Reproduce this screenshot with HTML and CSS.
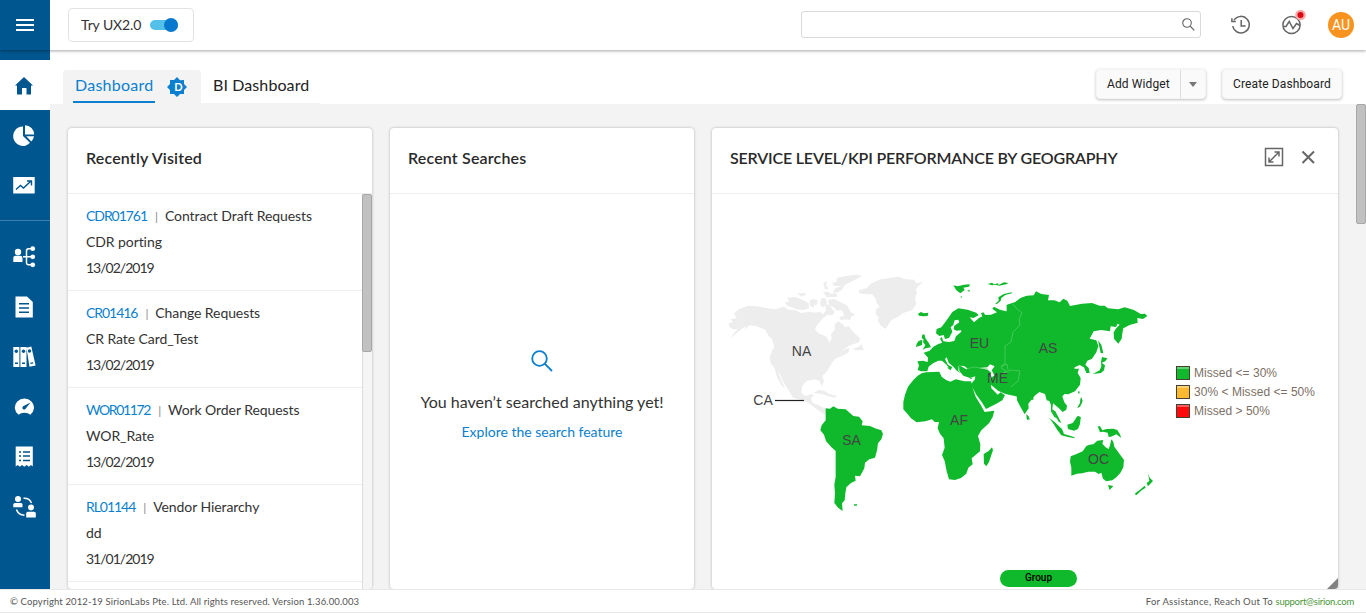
FILE: index.html
```html
<!DOCTYPE html>
<html lang="en">
<head>
<meta charset="utf-8">
<title>Dashboard</title>
<link rel="stylesheet" href="styles.css">
</head>
<body>
<div class="app">
  <header class="topbar">
    <button class="menu" aria-label="Menu"><span></span><span></span><span></span></button>
    <div class="try"><span class="try-label">Try UX2.0</span><span class="switch"><i></i></span></div>
    <div class="search"><svg width="13" height="13" viewBox="0 0 14 14"><circle cx="5.4" cy="5.4" r="4.6"/><path d="M8.6 8.6L13.300 13.300"/></svg></div>
    <svg class="history" width="22" height="22" viewBox="0 0 22 22"><path d="M4 6.2A8.3 8.3 0 1 1 2.8 12M1.9 4.2V7.6H5.8M11.2 6V12H15.6"/></svg>
    <svg class="activity" width="26" height="32" viewBox="0 0 26 32"><g><circle cx="11.5" cy="19" r="8.6"/><path d="M3.2 20.5H6L9.2 15.5L13 22.5L16.5 17.5L20 19.5"/></g><circle class="halo" cx="20.5" cy="9" r="5.3"/><circle class="dot" cx="20.5" cy="9" r="3"/></svg>
    <span class="avatar">AU</span>
  </header>
  <div class="main">
    <nav class="side">
      <a class="active"><svg width="26" height="26" viewBox="0 0 26 26"><path d="M13 5L22 13.500H20V22.500H15.5V16H11V22.500H6V13.500H4Z"/></svg></a>
      <a><svg width="26" height="26" viewBox="0 0 26 26"><path d="M12 4.500A9.7 9.7 0 1 0 19 20.800L12 14Z"/><path d="M14 3.300A9.3 9.3 0 0 1 23.2 12.5H14ZM15.2 14.300H23A9 9 0 0 1 20.3 19.600Z"/></svg></a>
      <a><svg width="26" height="26" viewBox="0 0 26 26"><path d="M2.2 5H23.7V21.5H2.2Z"/><path class="cut" d="M5 17.5L9.5 13.5L12.5 16L19.5 9.5M16 9H20.5V13.5"/></svg></a>
      <hr>
      <a><svg width="26" height="26" viewBox="0 0 26 26"><circle cx="7" cy="8" r="3.2"/><path d="M2.3 18V14Q2.3 11.8 5 11.8H9Q11.5 11.8 11.5 14V18Z"/><path class="line" d="M22 4.7H17.5Q15.5 4.7 15.5 7V18.5Q15.5 20.8 17.5 20.8H22M12 12.8H22"/><circle cx="21.7" cy="4.7" r="2.4"/><circle cx="21.7" cy="12.8" r="2.4"/><circle cx="21.7" cy="20.8" r="2.4"/></svg></a>
      <a><svg width="26" height="26" viewBox="0 0 26 26"><path d="M4.5 2.5H16L21.8 8V23.5H4.5Z"/><path class="cut" d="M8 9.8H18M8 14H18M8 18.2H18"/></svg></a>
      <a><svg width="26" height="26" viewBox="0 0 26 26"><path d="M2.3 3H8.4V23H2.3ZM9.4 3H15.5V23H9.4ZM15.4 3.7L20.3 2.5L24.6 21.5L18.5 22.7Z"/><g class="holes"><circle cx="5.3" cy="7.3" r="1.7"/><circle cx="12.5" cy="7.3" r="1.7"/><circle cx="18.5" cy="7" r="1.7"/><path d="M4 18.5H7V20H4ZM11 18.5H14V20H11ZM19.3 18.8L22 18.2L22.3 19.5L19.6 20.1Z"/></g></svg></a>
      <a><svg width="26" height="26" viewBox="0 0 26 26"><path d="M7.5 20.7A9.6 9 0 1 1 19.3 20.7Q17.3 18.7 13.4 18.7Q9.7 18.7 7.5 20.7Z"/><path class="holes" d="M19.5 8.5L14.8 14.5A1.8 1.8 0 1 1 12.6 12Z"/></svg></a>
      <a><svg width="26" height="26" viewBox="0 0 26 26"><path d="M4.7 2.5H21.8V22.5L20 21L17.9 22.7L15.7 21L13.3 22.7L11 21L8.8 22.7L6.7 21L4.7 22.5Z"/><path class="cut" d="M8 8H10M12 8H19M8 12H10M12 12H19M8 16.5H10M12 16.5H19"/></svg></a>
      <a><svg width="26" height="26" viewBox="0 0 26 26"><circle cx="7" cy="5" r="3"/><path d="M2.3 13.3V10.5Q2.3 9 4 9H10Q11.5 9 11.5 10.5V13.3Z"/><circle cx="20" cy="13.4" r="3"/><path d="M15.2 23.5V19.3Q15.2 17.7 17 17.7H23Q24.8 17.7 24.8 19.3V23.5Z"/><path class="line" d="M12.5 4.3Q18.5 4 20.5 9M5.5 15.5Q7 21 13.5 21.3"/></svg></a>
    </nav>
    <main class="content">
      <div class="tabs">
        <div class="tab current"><span>Dashboard</span><svg width="22" height="22" viewBox="0 0 22 22"><path d="M11 1L14 4.2L18 4L18 8L21 11L18 14V18H14L11 21L8 18H4V14L1 11L4 8V4H8Z"/><text x="12.4" y="15.1">D</text></svg></div>
        <div class="tab">BI Dashboard</div>
        <div class="actions">
          <div class="btn split"><span>Add Widget</span><b><i></i></b></div>
          <div class="btn create">Create Dashboard</div>
        </div>
      </div>
      <div class="board">
        <section class="card narrow">
          <h2 class="spaced">Recently Visited</h2>
          <div class="visited">
            <ul>
              <li><p><a>CDR01761</a><em>|</em>Contract Draft Requests</p><p>CDR porting</p><p class="date">13/02/2019</p></li>
              <li><p><a>CR01416</a><em>|</em>Change Requests</p><p>CR Rate Card_Test</p><p class="date">13/02/2019</p></li>
              <li><p><a class="tight">WOR01172</a><em>|</em>Work Order Requests</p><p>WOR_Rate</p><p class="date">13/02/2019</p></li>
              <li><p><a>RL01144</a><em>|</em>Vendor Hierarchy</p><p>dd</p><p class="date">31/01/2019</p></li>
            </ul>
            <div class="bar"><i></i></div>
          </div>
        </section>
        <section class="card narrow">
          <h2 class="spaced">Recent Searches</h2>
          <div class="empty">
            <svg width="22" height="22" viewBox="0 0 22 22"><circle cx="8.5" cy="8.5" r="7.3"/><path d="M13.7 13.7L21 21"/></svg>
            <p>You haven’t searched anything yet!</p>
            <a>Explore the search feature</a>
          </div>
        </section>
        <section class="card wide">
          <h2><span>SERVICE LEVEL/KPI PERFORMANCE BY GEOGRAPHY</span>
            <svg width="52" height="20" viewBox="0 0 52 20"><path d="M1.5 1.5H18.5V18.5H1.5ZM5 15L15 5M10.5 5H15V9.5M5 10.5V15H9.5"/><path class="close" d="M38.5 4.5L50 16M50 4.5L38.5 16"/></svg>
          </h2>
          <svg class="map" width="626" height="395" viewBox="712 194 626 395">
            <g class="none" transform="translate(720 260) scale(.33333)">
              <path d="M28 200L26 190L38 187L32 177L50 175L42 160L58 147L85 137L110 139L135 143L165 148L192 140L204 149L225 150L244 159L269 155L288 158L300 155L310 163L318 150L315 132L332 135L334 145L345 155L337 166L322 164L307 177L291 196L285 208L295 220L320 230L328 249L335 235L333 223L344 209L344 193L354 184L368 192L374 202L386 199L403 219L420 235L417 247L390 256L374 267L360 278L376 268L388 264L386 277L367 288L350 293L336 307L329 321L320 335L307 348L312 362L306 379L298 362L283 358L260 363L247 377L244 398L256 408L276 402L282 407L273 414L278 429L293 434L320 448L345 462L342 470L310 462L280 440L266 429L242 419L219 413L207 393L190 366L180 343L173 333L185 364L195 384L185 377L171 352L164 325L152 310L149 292L157 271L163 260L156 238L145 227L136 209L110 199L90 196L73 208L76 199L58 212L32 235L42 219L54 206L40 208Z"/>
              <path d="M201 113L226 111L242 117L252 122L267 130L266 145L250 150L229 148L215 142L201 137L195 127L208 125ZM231 101L252 98L259 103L247 110ZM270 121L281 117L293 121L292 133L281 136L282 143L270 137ZM304 115L317 115L321 129L308 143L300 132ZM309 96L325 95L331 101L350 100L352 110L320 112ZM323 121L342 116L356 124L367 129L382 137L392 156L405 164L392 171L392 181L378 178L362 181L358 171L373 167L365 151L350 152L341 142L329 136ZM310 68L320 64L319 78L327 85L315 89ZM336 70L350 65L350 54L377 48L412 44L426 49L409 58L386 69L374 76L365 90L350 98L337 96L348 84L362 79L343 77Z"/>
              <path d="M416 91L441 84L451 71L482 58L535 50L557 58L583 59L588 69L610 66L596 78L587 88L591 98L585 117L589 132L576 151L550 159L535 170L514 180L497 207L482 197L473 181L477 172L467 163L469 146L479 140L470 130L467 115L456 102L437 103L418 100Z"/>
              <path d="M280 399L298 389L314 393L328 402L352 408L338 412L322 407L306 402ZM330 410L348 407L347 413ZM415 261L425 253L431 270L407 271L397 267ZM352 270L368 259L371 264Z"/>
            </g>
            <g class="met" transform="translate(890 270) scale(.33333)">
              <path d="M83 300L87 286L82 274L99 272L113 276L114 263L101 248L119 242L130 230L145 222L157 218L150 206L155 201L160 214L177 216L193 213L198 199L214 185L213 181L199 182L191 178L193 167L208 157L205 149L194 151L190 164L182 172L187 185L177 204L165 207L161 195L148 198L138 190L140 177L154 172L171 149L187 126L205 115L233 119L259 128L266 136L250 144L239 142L252 157L267 144L277 139L273 130L280 127L286 135L303 134L321 127L307 116L312 110L330 119L355 125L350 105L378 96L391 85L410 79L430 82L430 390L360 375L345 371L324 362L310 350L303 344L304 355L316 367L323 374L332 367L345 376L337 391L319 401L288 417L277 399L259 374L246 350L242 343L254 329L256 319L240 324L220 317L208 303L207 286L219 292L228 298L240 294L269 294L293 299L304 308L300 326L313 316L305 301L314 289L300 283L292 292L274 293L239 300L222 288L206 287L205 302L211 310L199 301L190 290L176 278L170 262L165 267L174 285L187 291L181 300L170 285L156 272L145 272L129 280L116 290L112 304L93 304Z"/>
              <path d="M97 194L103 193L107 206L116 218L123 232L107 235L98 239L106 225L99 216L101 209L95 203ZM86 213L97 209L96 225L78 231L80 221ZM84 131L93 126L101 130L115 128L113 138L99 139L87 137ZM190 46L203 49L222 44L240 43L237 50L220 53L224 60L211 70L199 61ZM315 102L326 92L325 82L341 72L365 67L366 70L346 75L334 84L332 92L322 101ZM211 80L217 79L214 84ZM293 42L306 38L312 43L324 40L326 45L342 37L355 39L349 43L327 47L317 44L306 46ZM232 62L240 59L238 65ZM171 293L184 292L183 301ZM238 325L249 323L243 327Z"/>
            </g>
            <g class="met" transform="translate(1000 270) scale(.33333)">
              <path d="M20 105L45 97L62 84L80 77L101 76L108 64L124 72L147 75L144 91L163 91L179 97L190 86L202 92L210 108L246 101L276 99L299 107L314 107L324 115L355 118L374 112L402 120L422 132L435 131L442 138L429 147L412 144L413 158L389 165L370 175L367 190L365 206L355 221L342 206L341 187L349 174L359 164L353 161L348 171L332 169L330 184L303 180L281 184L269 206L289 211L295 228L289 247L276 266L262 272L256 284L266 294L269 309L259 309L252 292L239 285L224 292L223 296L237 296L233 309L242 324L240 344L225 364L205 373L194 372L187 379L193 397L201 407L199 419L188 426L176 414L166 406L159 400L157 418L167 438L179 449L163 441L153 424L153 405L148 393L140 391L135 372L118 366L104 377L85 401L86 415L74 433L62 412L51 391L50 375L34 370L18 365L20 103Z"/>
              <path d="M294 211L304 224L310 250L302 249ZM306 261L322 265L316 274L305 278L315 286L312 301L303 309L278 312L299 301L304 289L303 275ZM82 436L90 448L81 449ZM235 363L240 366L234 370ZM242 382L246 396L240 410L232 414L240 400ZM226 445L236 438L243 443L238 450Z"/>
            </g>
            <g class="met" transform="translate(810 380) scale(.33333)">
              <path d="M310 0L323 -13L335 -20L348 -23L388 -25L395 -10L407 -1L421 5L437 -2L463 4L483 4L488 24L497 50L510 71L524 96L553 92L548 111L537 130L514 151L504 168L511 193L510 214L485 235L488 253L475 263L469 281L453 294L435 300L417 298L410 274L404 243L396 225L404 203L401 175L390 161L383 145L387 126L374 126L366 118L346 124L320 127L303 115L292 101L280 88L280 66L285 44L294 20ZM546 202L549 211L545 222L537 246L529 259L522 251L521 222L536 213Z"/>
              <path d="M47 85L60 86L70 79L83 86L107 88L130 108L147 110L158 124L155 136L180 138L195 145L214 151L219 162L214 178L204 190L201 211L195 233L178 238L165 248L163 265L150 289L135 287L137 302L123 309L109 322L106 340L104 361L96 370L98 393L85 384L73 369L75 340L73 315L77 290V213L63 200L48 183L42 164L31 151L35 136L47 121ZM131 373L142 373L140 377L133 377Z"/>
            </g>
            <g class="met" transform="translate(1020 380) scale(.33333)">
              <path d="M87 113L103 125L126 147L132 162L162 171L165 175L144 171L124 166L112 150L101 132ZM142 134L158 129L174 107L182 113L180 132L174 147L162 152L144 147ZM96 88L106 94L119 119L124 129L116 125L105 106ZM19 103L27 110L25 119L20 116ZM174 35L180 39L177 41ZM184 51L188 63L181 77L172 83L181 69ZM233 139L240 139L247 151L260 147L280 146L292 150L299 161L304 174L289 163L273 170L266 171L263 158L249 155L240 157Z"/>
              <path d="M152 229L168 223L188 214L199 198L208 194L220 193L232 182L250 180L247 191L257 202L266 207L270 196L274 178L280 185L283 200L295 217L312 240L310 262L301 279L289 292L277 301L259 304L249 296L244 278L236 282L225 275L205 275L186 280L171 281L154 287L154 263L150 245ZM264 315L280 318L269 330ZM384 280L389 293L399 303L384 319L380 309L388 303ZM374 317L377 323L365 331L349 346L344 341L360 329Z"/>
            </g>
            <g class="border">
              <path d="M1013 304L1016 308L1022 313L1019 319L1020 325L1013 332L1011 342L1005 346V363L1001 368L1006 371L1002 374L1011 370L1020 371L1018 381L1011 387M966 369L974 367L988 369M1001 366L1007 364L1008 370"/>
            </g>
            <path class="leader" d="M775 400.500H804"/>
            <g class="labels">
              <text x="801.5" y="356">NA</text><text x="763" y="405">CA</text><text x="979.500" y="348">EU</text><text x="1048" y="353">AS</text><text x="997.500" y="383">ME</text><text x="959" y="425">AF</text><text x="851.500" y="445">SA</text><text x="1098.500" y="464">OC</text>
            </g>
            <g class="legend">
              <rect class="met" x="1176.500" y="366.500" width="13" height="13"/><rect class="partial" x="1176.500" y="385.500" width="13" height="13"/><rect class="missed" x="1176.500" y="404.500" width="13" height="13"/>
              <path d="M1177 368H1189M1177 387H1189M1177 406H1189"/>
              <text x="1194" y="377" textLength="83">Missed &lt;= 30%</text><text x="1194" y="396" textLength="121">30% &lt; Missed &lt;= 50%</text><text x="1194" y="415" textLength="76">Missed &gt; 50%</text>
            </g>
            <rect class="met" x="1000" y="570" width="77" height="17" rx="8.5"/><text class="group" x="1038.500" y="581">Group</text>
            <path class="resize" d="M1338 578V589H1327Z"/>
          </svg>
        </section>
      </div>
    </main>
    <div class="pagebar"><i></i></div>
  </div>
  <footer><span class="copy">© Copyright 2012-19 SirionLabs Pte. Ltd. All rights reserved. Version 1.36.00.003</span><span class="help">For Assistance, Reach Out To <a>support@sirion.com</a></span></footer>
</div>
</body>
</html>
```
FILE: styles.css
```css
* { box-sizing: border-box; }
body { margin: 0; font: 14px Lato, "Open Sans", sans-serif; color: #333; background: #fff; }
p, h2, ul { margin: 0; padding: 0; }
a { color: #0c7fce; }
svg { flex: none; display: block; }
.app { width: 1366px; height: 613px; display: flex; flex-direction: column; overflow: hidden; }
.topbar { height: 50px; flex: none; display: flex; align-items: center; background: #fff; box-shadow: 0 1px 3px rgba(0,0,0,.35); z-index: 2; }
.menu { width: 50px; height: 50px; border: 0; padding: 0; background: #00568f; display: flex; flex-direction: column; align-items: center; justify-content: center; gap: 3px; }
.menu span { width: 18px; height: 2px; background: #fff; }
.try { width: 126px; height: 34px; margin-left: 18px; padding-left: 12px; border: 1px solid #e2e2e2; border-radius: 4px; display: flex; align-items: center; color: #333; }
.try-label { width: 69px; padding-bottom: 1px; letter-spacing: -.1px; white-space: nowrap; }
.switch { width: 28px; height: 10px; border-radius: 5px; background: #52c0e8; display: flex; align-items: center; justify-content: flex-end; }
.switch i { width: 14px; height: 14px; border-radius: 50%; background: #0679cf; }
.search { width: 400px; height: 27px; margin-left: auto; padding: 0 5px 1px 0; border: 1px solid #d9d9d9; border-radius: 3px; display: flex; align-items: center; justify-content: flex-end; margin-bottom: 1px; }
.search svg, .history, .activity g { fill: none; stroke: #666; stroke-width: 1.5; }
.search svg { stroke-width: 1.2; }
.history { margin-left: 29px; }
.activity { margin: -7px 0 0 28px; }
.halo { fill: #f5a9a9; }
.dot { fill: #dc0814; }
.avatar { width: 26px; height: 26px; margin: 0 12px 0 22px; border-radius: 50%; background: #f7931e; color: #fff; font-family: Roboto, sans-serif; display: flex; align-items: center; justify-content: center; }
.main { height: 539px; display: flex; flex: none; }
.side { width: 50px; background: #00568f; padding-top: 10px; }
.side a { height: 50px; padding-right: 2px; display: flex; align-items: center; justify-content: center; }
.side svg { fill: #fff; }
.side .active { background: #fff; }
.side .active svg { fill: #00568f; }
.side hr { margin: 10px 0 11px; border: 0; border-top: 1px solid #3f80ab; }
.side .cut { fill: none; stroke: #00568f; stroke-width: 1.4; }
.side .line { fill: none; stroke: #fff; stroke-width: 1.5; }
.side .holes { fill: #00568f; }
.content { width: 1306px; background: #f3f3f3; }
.tabs { height: 54px; padding: 20px 14px 0 13px; background: #fff; display: flex; font-size: 16px; }
.tab { width: 119px; height: 34px; padding: 5px 0 0 12px; letter-spacing: .1px; color: #222; white-space: nowrap; border-bottom: 1px solid #f3f3f3; }
.tab.current { width: 138px; padding: 0 0 0 10px; border: 0; border-radius: 4px 4px 0 0; background: #f3f3f3; color: #0c7fce; display: flex; gap: 11px; }
.tab.current span { width: 82px; height: 33px; padding: 5px 0 0 2px; letter-spacing: .25px; border-bottom: 2px solid #0c7fce; }
.tab svg { margin-top: 6px; fill: #0c7fce; }
.tab text { fill: #fff; font-size: 11px; font-weight: 700; text-anchor: middle; }
.actions { margin: -1px 0 0 auto; display: flex; gap: 16px; }
.btn { height: 30px; border: 1px solid #f4f4f4; border-radius: 4px; background: #fafafa; box-shadow: 0 1px 3px rgba(0,0,0,.25); display: flex; align-items: center; white-space: nowrap; font: 12px Roboto, sans-serif; letter-spacing: .12px; color: #222; }
.split { width: 110px; padding-left: 10px; }
.split b { width: 25px; height: 28px; margin-left: auto; border-left: 1px solid #ddd; display: flex; align-items: center; justify-content: center; }
.split b i { border: 4px solid transparent; border-top: 5px solid #777; border-bottom: 0; }
.create { width: 120px; justify-content: center; }
.board { height: 485px; padding: 24px 18px 0; display: flex; gap: 18px; overflow: hidden; }
.card { height: 461px; background: #fff; border-radius: 4px; box-shadow: 0 0 3px rgba(0,0,0,.28); flex: none; overflow: hidden; }
.narrow { width: 304px; }
.wide { width: 626px; }
.card h2 { height: 66px; padding: 0 22px 7px 18px; border-bottom: 1px solid #eee; display: flex; align-items: center; justify-content: space-between; font-size: 16px; font-weight: 600; color: #292929; white-space: nowrap; }
.card .spaced { letter-spacing: .17px; }
.wide h2 span { letter-spacing: -.18px; }
.card h2 svg { fill: none; stroke: #666; stroke-width: 1.5; }
.card h2 .close { stroke-width: 2; }
.visited { display: flex; height: 395px; }
ul { flex: 1; list-style: none; }
li { height: 97px; padding: 9px 0 0 18px; border-bottom: 1px solid #eee; white-space: nowrap; }
li p { height: 26px; line-height: 25px; letter-spacing: -.08px; }
li a { letter-spacing: -1.05px; }
li .tight { letter-spacing: -1.35px; }
li .date { letter-spacing: -1px; }
li em { margin: 0 7px 0 8px; color: #888; font-style: normal; font-size: 12px; }
.bar { width: 10px; background: #f5f5f5; border-left: 1px solid #ddd; }
.bar i { display: block; width: 10px; margin-left: -1px; height: 158px; background: #c1c1c1; border: 1px solid #a8a8a8; border-radius: 2px; }
.empty { display: flex; flex-direction: column; align-items: center; padding-top: 156px; }
.empty svg { fill: none; stroke: #0c7fce; stroke-width: 1.8; }
.empty p { margin-top: 20px; font-size: 16px; line-height: 20px; white-space: nowrap; }
.empty a { margin-top: 11px; line-height: 18px; }
.none { fill: #ededed; }
.met { fill: #0fb92b; }
.partial { fill: #fbb831; }
.missed { fill: #fb090b; }
.border { fill: none; stroke: #67d477; stroke-width: .6; }
.leader { stroke: #222; stroke-width: 1.2; }
.labels { font: 14px "Liberation Sans", sans-serif; fill: #444; text-anchor: middle; }
.legend { font: 12px "Liberation Sans", sans-serif; fill: #7c7065; }
.legend rect { stroke: #454030; }
.legend path { stroke: #fff; stroke-opacity: .35; stroke-width: 2; }
.group { font: 500 10px Roboto, sans-serif; fill: #000; text-anchor: middle; }
.resize { fill: #818181; }
.pagebar { width: 10px; padding-top: 54px; background: linear-gradient(#fff 54px, #f3f3f3 54px); }
.pagebar i { display: block; height: 120px; background: #c1c1c1; border: 1px solid #a8a8a8; border-radius: 2px; }
footer { height: 24px; padding: 0 12px 0 10px; border-top: 1px solid #e8e8e8; border-bottom: 1px solid #e8e8e8; display: flex; align-items: center; justify-content: space-between; font-size: 9.5px; color: #555; background: #fff; white-space: nowrap; }
.copy { letter-spacing: .135px; }
.help { letter-spacing: .25px; }
footer a { color: #4c9638; letter-spacing: -.25px; }
```
